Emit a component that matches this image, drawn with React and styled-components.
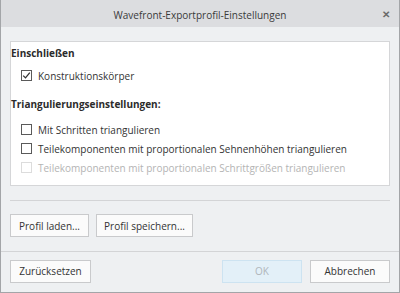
import styled, { createGlobalStyle } from "styled-components";

const GlobalStyle = createGlobalStyle`
  html, body {
    margin: 0;
    padding: 0;
    background: #eef0f2;
  }
  * {
    box-sizing: border-box;
  }
`;

const CheckIcon = () => (
  <svg width="9" height="9" viewBox="0 0 9 9">
    <path d="M1.2 4.6 L3.5 6.9 L7.8 1.6" fill="none" stroke="#333" strokeWidth="1.3" />
  </svg>
);

const App = () => {
  return (
    <Window>
      <GlobalStyle />
      <TitleBar>
        <span />
        <Title>Wavefront-Exportprofil-Einstellungen</Title>
        <CloseButton>✕</CloseButton>
      </TitleBar>
      <Body>
        <Panel>
          <SectionTitle>Einschließen</SectionTitle>
          <CheckRow $top={5}>
            <Box $checked>
              <CheckIcon />
            </Box>
            Konstruktionskörper
          </CheckRow>
          <SectionTitle $top={11}>Triangulierungseinstellungen:</SectionTitle>
          <CheckRow $top={8}>
            <Box />
            Mit Schritten triangulieren
          </CheckRow>
          <CheckRow>
            <Box />
            Teilekomponenten mit proportionalen Sehnenhöhen triangulieren
          </CheckRow>
          <CheckRow $disabled>
            <Box $disabled />
            Teilekomponenten mit proportionalen Schrittgrößen triangulieren
          </CheckRow>
        </Panel>
        <Divider />
        <ProfileRow>
          <Button $width={79}>Profil laden...</Button>
          <Button $width={97}>Profil speichern...</Button>
        </ProfileRow>
      </Body>
      <Footer>
        <Button $width={81}>Zurücksetzen</Button>
        <Spacer />
        <Button $width={80} $primary disabled>
          OK
        </Button>
        <Button $width={80}>Abbrechen</Button>
      </Footer>
    </Window>
  );
};

const Window = styled.div`
  width: 400px;
  height: 293px;
  border: 1px solid #a3a5a8;
  border-top: none;
  background: #eef0f2;
  display: flex;
  flex-direction: column;
  font-family: "Open Sans", "Noto Sans", sans-serif;
  font-size: 10px;
  color: #333;
`;

const TitleBar = styled.div`
  height: 27px;
  flex-shrink: 0;
  background: #dcdde0;
  display: grid;
  grid-template-columns: 1fr auto 1fr;
  align-items: center;
`;

const Title = styled.div`
  font-size: 10px;
  color: #3a3a3a;
  padding-top: 2px;
`;

const CloseButton = styled.div`
  justify-self: end;
  margin-right: 9px;
  padding-top: 1px;
  font-size: 10px;
  font-weight: bold;
  color: #6a6a6a;
`;

const Body = styled.div`
  padding: 14px 9px 0;
  display: flex;
  flex-direction: column;
`;

const Panel = styled.div`
  height: 145px;
  background: #fff;
  border: 1px solid #d5d6d8;
  padding-top: 3px;
`;

const SectionTitle = styled.div`
  font-weight: bold;
  line-height: 16px;
  margin-top: ${({ $top }) => $top || 0}px;
  color: #2b2b2b;
`;

const CheckRow = styled.div`
  display: flex;
  align-items: center;
  gap: 6px;
  height: 19px;
  padding-left: 10px;
  margin-top: ${({ $top }) => $top || 0}px;
  color: ${({ $disabled }) => ($disabled ? "#b4b4b4" : "#333")};
`;

const Box = styled.span`
  width: 11px;
  height: 11px;
  border: 1px solid ${({ $disabled }) => ($disabled ? "#dcdcdc" : "#5a5a5a")};
  background: #fff;
  display: flex;
  align-items: center;
  justify-content: center;
  flex-shrink: 0;
`;

const Divider = styled.div`
  height: 1px;
  background: #d3d4d6;
  margin-top: 14px;
`;

const ProfileRow = styled.div`
  display: flex;
  gap: 7px;
  margin-top: 13px;
`;

const Button = styled.button`
  width: ${({ $width }) => $width}px;
  height: 23px;
  padding: 0;
  font-family: inherit;
  font-size: 10px;
  color: ${({ $primary }) => ($primary ? "#b0b6bb" : "#333")};
  background: ${({ $primary }) => ($primary ? "#e3f0f8" : "#fbfbfb")};
  border: 1px solid ${({ $primary }) => ($primary ? "#cde3f1" : "#c9cacc")};
`;

const Footer = styled.div`
  margin-top: auto;
  border-top: 1px solid #d3d4d6;
  height: 41px;
  display: flex;
  align-items: center;
  gap: 8px;
  padding: 0 9px 2px;
`;

const Spacer = styled.div`
  flex: 1;
`;

export default App;
